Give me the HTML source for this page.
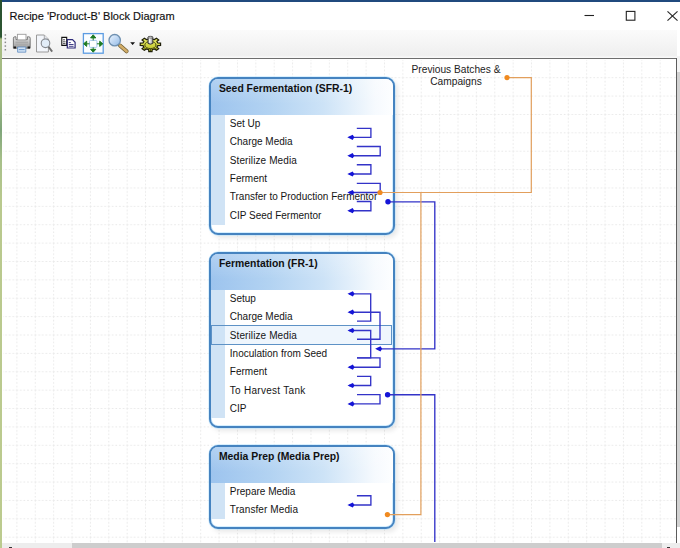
<!DOCTYPE html>
<html><head><meta charset="utf-8">
<style>
*{margin:0;padding:0;box-sizing:border-box}
html,body{width:680px;height:548px;overflow:hidden;background:#fff;font-family:"Liberation Sans",sans-serif;position:relative}
.abs{position:absolute}
#topline{left:0;top:0;width:680px;height:2px;background:#204a7e}
#leftline{left:0;top:0;width:2px;height:548px;background:linear-gradient(#2a5230 0,#2d5632 37px,#a9bd84 39px,#9fb882 100px,#7fa57a 130px,#a7c08a 160px,#b9c98e 200px,#bccb8f 548px)}
#title{left:9.6px;top:8px;font-size:11px;color:#111;-webkit-text-stroke:0.15px #111;white-space:nowrap;line-height:16px}
#toolbar{left:2px;top:30px;width:675px;height:28px;background:linear-gradient(#fbfbfb,#efefef 90%,#fafafa)}
#canvasborder{left:2px;top:58px;width:676px;height:1px;background:#6e6e6e}
.box{position:absolute;left:209px;width:186px;border:2.2px solid #4583c0;border-radius:9px;background:#fff;box-shadow:0 0 0 0.7px rgba(185,228,255,0.7),3px 3px 5px rgba(0,0,0,0.09),inset 0 0 0 0.8px rgba(185,228,255,0.8);overflow:hidden}
.hdr{position:absolute;left:0;top:0;right:0;height:35.6px;background:linear-gradient(to bottom,rgba(255,255,255,0.22),rgba(255,255,255,0) 70%),linear-gradient(90deg,#9dc4ee 0%,#b3d3f2 33%,#cde3f7 62%,#f6fafe 90%,#fdfeff 100%)}
.ttl{position:absolute;left:7.9px;top:3px;font-weight:bold;font-size:10.4px;color:#111;white-space:nowrap;line-height:14px}
.strip{position:absolute;left:0;width:13.5px;top:35.6px;background:#d0e3f5}
.items{position:absolute;left:0;right:0;top:35.8px}
.it{height:18.4px;line-height:18.4px;font-size:10px;color:#151515;padding-left:18.8px;white-space:nowrap;position:relative}
.sel{position:absolute;left:0;right:0.6px;border:1.3px solid #5e92c6;background:rgba(205,228,248,0.32)}
</style></head><body>
<div class="abs" id="topline"></div>
<div class="abs" id="title">Recipe 'Product-B' Block Diagram</div>
<svg class="abs" style="left:580px;top:8px" width="100" height="16">
  <line x1="4.5" y1="7.5" x2="14" y2="7.5" stroke="#222" stroke-width="1.1"/>
  <rect x="46.3" y="3.4" width="8.6" height="8.8" fill="none" stroke="#222" stroke-width="1.1"/>
  <line x1="87.5" y1="3.3" x2="97.5" y2="12.7" stroke="#222" stroke-width="1.1"/>
  <line x1="97.5" y1="3.3" x2="87.5" y2="12.7" stroke="#222" stroke-width="1.1"/>
</svg>
<div class="abs" id="toolbar"></div>
<div class="abs" id="canvasborder"></div>
<svg class="abs" style="left:0;top:0" width="170" height="58">
  <defs>
    <linearGradient id="prb" x1="0" y1="0" x2="0" y2="1"><stop offset="0" stop-color="#e4e4e4"/><stop offset="1" stop-color="#9a9a9a"/></linearGradient>
    <linearGradient id="mag" x1="0" y1="0" x2="1" y2="1"><stop offset="0" stop-color="#eef6ff"/><stop offset="1" stop-color="#8fb8e6"/></linearGradient>
    <linearGradient id="gear" x1="0" y1="0" x2="0" y2="1"><stop offset="0" stop-color="#f0f070"/><stop offset="1" stop-color="#b8c020"/></linearGradient>
  </defs>
  <!-- grip -->
  <g fill="#8a8a8a"><rect x="4.6" y="34.2" width="1.5" height="1.5"/><rect x="4.6" y="37.9" width="1.5" height="1.5"/><rect x="4.6" y="41.6" width="1.5" height="1.5"/><rect x="4.6" y="45.3" width="1.5" height="1.5"/><rect x="4.6" y="49" width="1.5" height="1.5"/></g>
  <!-- printer -->
  <path d="M13.4,48.2 V38.2 Q13.4,36.8 14.8,36.8 H16 V39.6 H27.4 V36.8 H28.8 Q30.2,36.8 30.2,38.2 V48.2 Z" fill="url(#prb)" stroke="#6f6f6f" stroke-width="0.9"/>
  <rect x="17.4" y="34.3" width="8.6" height="5.6" fill="#fff" stroke="#9c9c9c" stroke-width="0.9"/>
  <rect x="13.6" y="46.5" width="2.4" height="2" fill="#1a1a1a"/><rect x="27.6" y="46.5" width="2.4" height="2" fill="#1a1a1a"/>
  <line x1="15.5" y1="42.2" x2="28" y2="42.2" stroke="#8d8d8d" stroke-width="0.6"/>
  <line x1="15.5" y1="44.2" x2="28" y2="44.2" stroke="#9a9a9a" stroke-width="0.5"/>
  <path d="M17.6,47 H25.8 V52.2 H17.6 Z" fill="#cfe1f3" stroke="#5f8cc0" stroke-width="0.8"/>
  <line x1="18.8" y1="49.6" x2="24.6" y2="49.6" stroke="#6e9bd0" stroke-width="1"/>
  <!-- print preview -->
  <path d="M36.5,35 H44.3 L48.4,39.2 V52 H36.5 Z" fill="#f3f6fb" stroke="#9a9a9a" stroke-width="1"/>
  <path d="M44.3,35 V39.2 H48.4" fill="#e4e8ee" stroke="#9a9a9a" stroke-width="0.8"/>
  <line x1="48.4" y1="46.6" x2="52.2" y2="51.6" stroke="#6f6f6f" stroke-width="1.8"/>
  <circle cx="45.5" cy="43.3" r="4.3" fill="#e2edf8" stroke="#85898f" stroke-width="1.1"/>
  <!-- copy -->
  <path d="M61.8,37.4 H66.7 V45.4 H61.8 Z" fill="#fff" stroke="#111" stroke-width="1.1"/>
  <line x1="63" y1="39.8" x2="65" y2="39.8" stroke="#222" stroke-width="0.8"/>
  <line x1="63" y1="41.8" x2="65.5" y2="41.8" stroke="#222" stroke-width="0.8"/>
  <line x1="63" y1="43.6" x2="65.5" y2="43.6" stroke="#222" stroke-width="0.8"/>
  <path d="M67.3,39.7 H72.5 L75.1,42.3 V48 H67.3 Z" fill="#fff" stroke="#2e2a7a" stroke-width="1.2"/>
  <line x1="68.8" y1="42.6" x2="70.8" y2="42.6" stroke="#2e2a7a" stroke-width="0.9"/>
  <line x1="68.8" y1="44.5" x2="73.6" y2="44.5" stroke="#2e2a7a" stroke-width="0.9"/>
  <line x1="68.8" y1="46.3" x2="73.6" y2="46.3" stroke="#2e2a7a" stroke-width="0.9"/>
  <!-- fit -->
  <rect x="83.4" y="33.6" width="19.8" height="19.6" fill="#fafdff" stroke="#5c9ce2" stroke-width="1.3"/>
  <rect x="89.5" y="40.4" width="7.4" height="7" rx="1" fill="#fff" stroke="#a7c7ef" stroke-width="1"/>
  <g fill="#1d7a22" stroke="#1d7a22" stroke-width="1">
    <line x1="93.2" y1="37.5" x2="93.2" y2="40.4"/><path d="M93.2,34.8 L95.8,37.9 H90.6 Z"/>
    <line x1="93.2" y1="47.4" x2="93.2" y2="49.8"/><path d="M93.2,52.2 L95.8,49.3 H90.6 Z"/>
    <line x1="86.3" y1="43.8" x2="89.5" y2="43.8"/><path d="M83.6,43.8 L86.7,41.2 V46.4 Z"/>
    <line x1="96.9" y1="43.8" x2="100" y2="43.8"/><path d="M102.8,43.8 L99.7,41.2 V46.4 Z"/>
  </g>
  <!-- zoom -->
  <line x1="120" y1="45.5" x2="126.6" y2="51.3" stroke="#6b5a30" stroke-width="4"  stroke-linecap="round"/>
  <line x1="120" y1="45.5" x2="126.6" y2="51.3" stroke="#d2ad68" stroke-width="2.6" stroke-linecap="round"/>
  <circle cx="114.7" cy="40.2" r="5.7" fill="url(#mag)" stroke="#6f90b0" stroke-width="1.3"/>
  <path d="M130.2,42.3 H135 L132.6,44.9 Z" fill="#111"/>
  <!-- gear -->
  <path d="M148.62,38.98 L148.79,36.99 L152.01,36.99 L152.18,38.98 L154.38,39.63 L156.45,38.31 L158.73,39.95 L156.90,41.44 L157.81,43.02 L160.57,43.14 L160.57,45.46 L157.81,45.58 L156.90,47.16 L158.73,48.65 L156.45,50.29 L154.38,48.97 L152.18,49.62 L152.01,51.61 L148.79,51.61 L148.62,49.62 L146.42,48.97 L144.35,50.29 L142.07,48.65 L143.90,47.16 L142.99,45.58 L140.23,45.46 L140.23,43.14 L142.99,43.02 L143.90,41.44 L142.07,39.95 L144.35,38.31 L146.42,39.63 Z" fill="url(#gear)" stroke="#1e1e08" stroke-width="1.2"/>
  <ellipse cx="150.4" cy="45" rx="5.6" ry="3.6" fill="none" stroke="#3a3a10" stroke-width="0.9"/>
  <line x1="144" y1="47.5" x2="146" y2="49.5" stroke="#2a2a08" stroke-width="0.8"/>
  <line x1="156.8" y1="47.5" x2="154.8" y2="49.5" stroke="#2a2a08" stroke-width="0.8"/>
  <line x1="150.4" y1="48.8" x2="150.4" y2="51" stroke="#2a2a08" stroke-width="0.8"/>
  <path d="M148,37.2 V43.4 Q150.4,45 152.8,43.4 V37.2 Z" fill="#bdbdbd" stroke="#333" stroke-width="1"/>
  <ellipse cx="150.4" cy="37.2" rx="2.4" ry="0.9" fill="#e6e6e6" stroke="#444" stroke-width="0.7"/>
  <line x1="149.8" y1="38.6" x2="149.8" y2="42.8" stroke="#fff" stroke-width="1.3"/>
</svg>


<!-- grid + connectors -->
<svg class="abs" style="left:0;top:0" width="680" height="548" id="grid">
  <defs>
    <pattern id="gp" x="16.4" y="77.2" width="18.38" height="18.38" patternUnits="userSpaceOnUse">
      <line x1="0.5" y1="0" x2="0.5" y2="18.38" stroke="#e8e8e8" stroke-width="1" stroke-dasharray="1.6,2"/>
      <line x1="0" y1="0.5" x2="18.38" y2="0.5" stroke="#e8e8e8" stroke-width="1" stroke-dasharray="1.6,2"/>
    </pattern>
  </defs>
  <rect x="3" y="60" width="673" height="483" fill="url(#gp)"/>
</svg>

<div class="box" style="top:77px;height:158px">
  <div class="hdr"></div>
  <div class="ttl">Seed Fermentation (SFR-1)</div>
  <div class="strip" style="height:110.4px"></div>
  <div class="items">
    <div class="it">Set Up</div>
    <div class="it">Charge Media</div>
    <div class="it" style="letter-spacing:0.1px">Sterilize Media</div>
    <div class="it">Ferment</div>
    <div class="it">Transfer to Production Fermentor</div>
    <div class="it">CIP Seed Fermentor</div>
  </div>
</div>

<div class="box" style="top:252px;height:175.5px">
  <div class="hdr"></div>
  <div class="ttl">Fermentation (FR-1)</div>
  <div class="strip" style="height:128.8px"></div>
  <div class="sel" style="top:71px;height:19.5px"></div>
  <div class="items">
    <div class="it">Setup</div>
    <div class="it">Charge Media</div>
    <div class="it" style="letter-spacing:0.1px">Sterilize Media</div>
    <div class="it">Inoculation from Seed</div>
    <div class="it">Ferment</div>
    <div class="it" style="letter-spacing:0.28px">To Harvest Tank</div>
    <div class="it">CIP</div>
  </div>
</div>

<div class="box" style="top:445px;height:83.5px">
  <div class="hdr"></div>
  <div class="ttl">Media Prep (Media Prep)</div>
  <div class="strip" style="height:36.8px"></div>
  <div class="items">
    <div class="it">Prepare Media</div>
    <div class="it" style="letter-spacing:0.1px">Transfer Media</div>
  </div>
</div>

<div class="abs" style="left:411px;top:63.6px;width:90px;text-align:center;font-size:10.2px;line-height:12px;color:#222">Previous Batches &amp;<br>Campaigns</div>

<svg class="abs" style="left:0;top:0" width="680" height="548">
  <defs>
    <g id="ar"><path d="M0,0 L5.4,-2.6 L7,0 L5.4,2.6 Z" fill="#1414d6"/></g>
  </defs>
  <g fill="none" stroke="#3333c8" stroke-width="1.35">
    <!-- box1 -->
    <path d="M356.8,128.4 H370.9 V137.3 H349"/>
    <path d="M356.8,146.5 H380.2 V155.7 H349"/>
    <path d="M356.8,164.7 H370.9 V174 H349"/>
    <path d="M356.8,183.4 H380.2 V192.5 H349"/>
    <path d="M356.8,201.5 H370.9 V210.7 H349"/>
    <!-- box2 -->
    <path d="M357,321.1 H370.7 V293.8 H349"/>
    <path d="M357,339.2 H380 V312.2 H349"/>
    <path d="M357,357.8 H370.7 V330.5 H349"/>
    <path d="M357,357.8 H380 V367.2 H349"/>
    <path d="M357,376.3 H370.7 V385.5 H349"/>
    <path d="M357,394.6 H380 V403.9 H349"/>
    <!-- box3 -->
    <path d="M356.9,495.7 H370.9 V505 H349"/>
    <!-- long -->
    <path d="M388,201.8 H434.8 V348.8 H377"/>
    <path d="M387.6,394.7 H434.8 V542"/>
  </g>
  <g>
    <use href="#ar" x="347.3" y="137.3"/>
    <use href="#ar" x="347.3" y="155.7"/>
    <use href="#ar" x="347.3" y="174"/>
    <use href="#ar" x="347.3" y="192.5"/>
    <use href="#ar" x="347.3" y="210.7"/>
    <use href="#ar" x="347.5" y="293.8"/>
    <use href="#ar" x="347.5" y="312.2"/>
    <use href="#ar" x="347.5" y="330.5"/>
    <use href="#ar" x="347.5" y="367.2"/>
    <use href="#ar" x="347.5" y="385.5"/>
    <use href="#ar" x="347.5" y="403.9"/>
    <use href="#ar" x="347.4" y="505"/>
    <use href="#ar" x="375.1" y="348.8"/>
  </g>
  <g fill="none" stroke="#e29f5c" stroke-width="1.2">
    <path d="M507,77.6 H531.3 V192.5 H380"/>
    <path d="M420.9,192.5 V514.6 H387.4"/>
  </g>
  <circle cx="507" cy="77.6" r="2.6" fill="#f08a20"/>
  <circle cx="380" cy="192.5" r="2.6" fill="#f08a20"/>
  <circle cx="387.4" cy="514.6" r="2.6" fill="#f08a20"/>
  <circle cx="388" cy="201.8" r="2.7" fill="#1515d8"/>
  <circle cx="387.6" cy="394.7" r="2.7" fill="#1515d8"/>
</svg>

<!-- scrollbars -->
<div class="abs" style="left:2px;top:543px;width:678px;height:5px;background:#ededed"></div>
<div class="abs" style="left:72px;top:543px;width:590px;height:5px;background:#cdcdcd"></div>
<div class="abs" style="left:676px;top:58px;width:1px;height:484.5px;background:#5c5c5c"></div>
<div class="abs" style="left:677px;top:56px;width:3px;height:16px;background:#f4f4f4"></div>
<div class="abs" style="left:677px;top:72px;width:3px;height:455px;background:#d2d2d2"></div>
<div class="abs" style="left:9px;top:546.8px;width:3px;height:2px;background:#333"></div>
<div class="abs" style="left:667.2px;top:546.6px;width:3px;height:2px;background:#333"></div>
<div class="abs" id="leftline"></div>
</body></html>
